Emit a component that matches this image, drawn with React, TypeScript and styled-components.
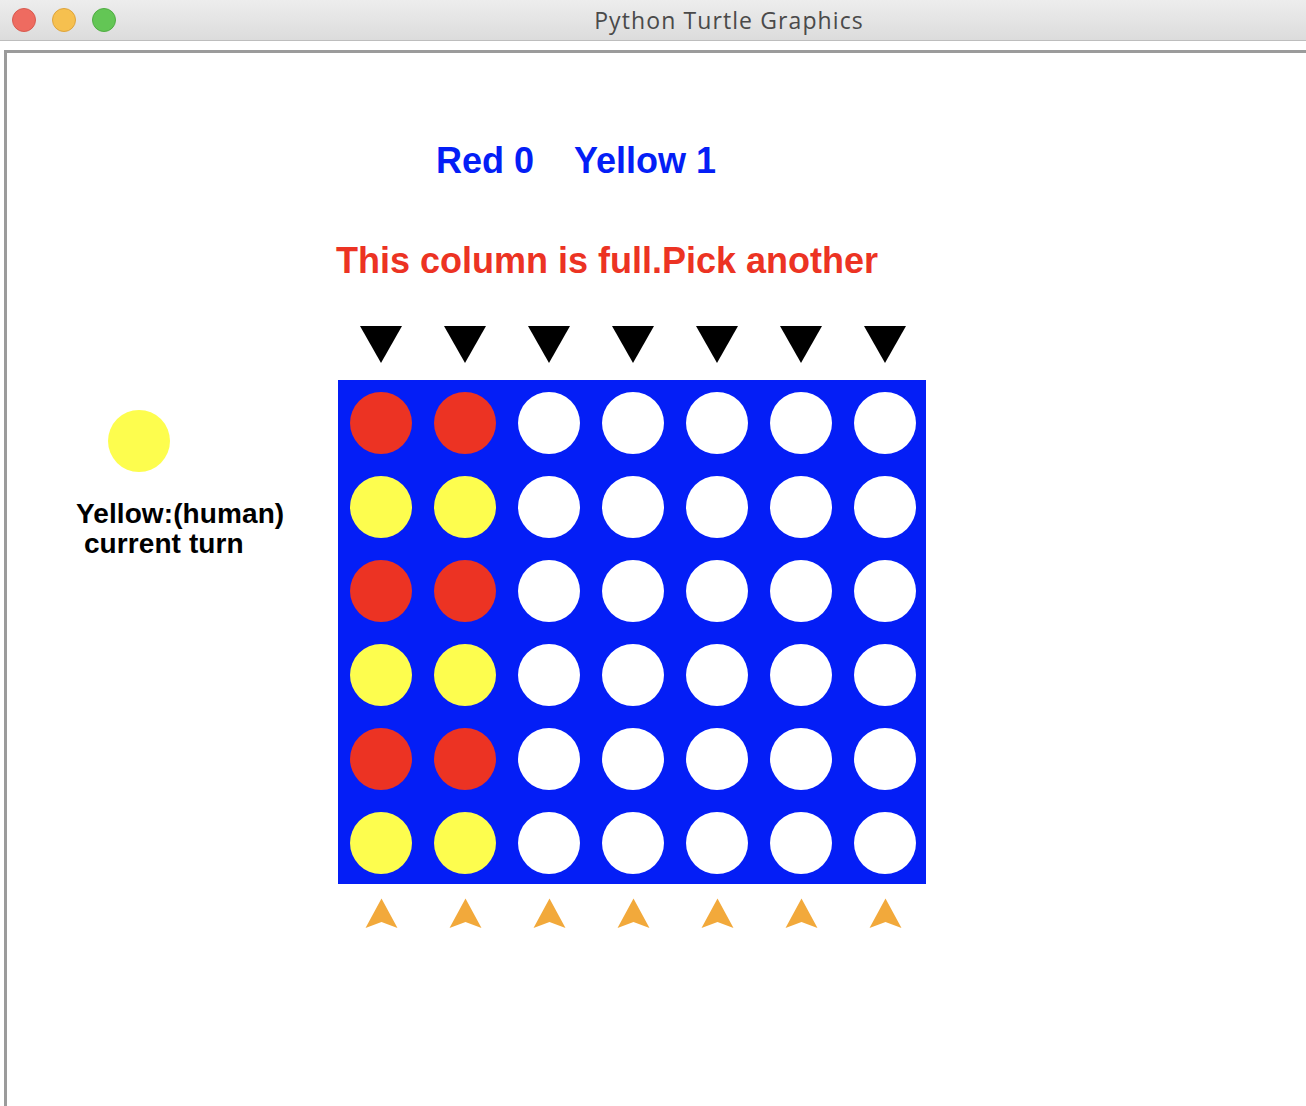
import React from "react";
import styled, { createGlobalStyle } from "styled-components";

const GlobalStyle = createGlobalStyle`
  html, body {
    margin: 0;
    padding: 0;
    background: #ffffff;
    overflow: hidden;
  }
  body {
    font-family: "Liberation Sans", Arial, sans-serif;
  }
`;

const BLUE = "#041ef6";
const RED = "#ec3323";
const YELLOW = "#fdfd4e";
const ORANGE = "#f2a93b";

type Piece = "r" | "y" | "e";

const BOARD: Piece[][] = [
  ["r", "r", "e", "e", "e", "e", "e"],
  ["y", "y", "e", "e", "e", "e", "e"],
  ["r", "r", "e", "e", "e", "e", "e"],
  ["y", "y", "e", "e", "e", "e", "e"],
  ["r", "r", "e", "e", "e", "e", "e"],
  ["y", "y", "e", "e", "e", "e", "e"],
];

const pieceColor: Record<Piece, string> = {
  r: RED,
  y: YELLOW,
  e: "#ffffff",
};

const Window = styled.div`
  width: 1306px;
  height: 1106px;
  display: flex;
  flex-direction: column;
  background: #ffffff;
  overflow: hidden;
`;

const TitleBar = styled.div`
  flex: none;
  height: 40px;
  display: flex;
  align-items: center;
  overflow: hidden;
  background: linear-gradient(to bottom, #ededed 0%, #dcdcdc 100%);
  border-bottom: 1px solid #bdbdbd;
`;

const Lights = styled.div`
  flex: none;
  width: 116px;
  box-sizing: border-box;
  padding-left: 12px;
  display: flex;
  gap: 16px;
`;

const Light = styled.span<{ $fill: string; $edge: string }>`
  width: 24px;
  height: 24px;
  box-sizing: border-box;
  border-radius: 50%;
  background: ${(p) => p.$fill};
  border: 1px solid ${(p) => p.$edge};
`;

const Title = styled.div`
  flex: none;
  width: 1226px;
  text-align: center;
  font-family: "Open Sans", "Liberation Sans", sans-serif;
  font-size: 23px;
  line-height: 42px;
  color: #4a4a4a;
  letter-spacing: 1.1px;
`;

const Body = styled.div`
  flex: 1;
  padding: 9px 0 0 4px;
  display: flex;
`;

const Canvas = styled.div`
  flex: 1;
  border-top: 3px solid #9b9b9b;
  border-left: 3px solid #9b9b9b;
  display: flex;
  align-items: flex-start;
`;

const Side = styled.div`
  flex: none;
  width: 331px;
  display: flex;
  flex-direction: column;
  align-items: flex-start;
`;

const TurnDisc = styled.div`
  width: 62px;
  height: 62px;
  border-radius: 50%;
  background: ${YELLOW};
  margin: 357px 0 0 101px;
`;

const TurnText = styled.div`
  margin: 27px 0 0 69px;
  font-family: "Liberation Sans", Arial, sans-serif;
  font-weight: 700;
  font-size: 28px;
  line-height: 30px;
  color: #000000;
  white-space: pre;
  letter-spacing: 0.1px;
`;

const Main = styled.div`
  flex: none;
  display: flex;
  flex-direction: column;
  align-items: flex-start;
`;

const Score = styled.div`
  margin: 90px 0 0 98px;
  display: flex;
  gap: 40px;
  font-weight: 700;
  font-size: 36px;
  line-height: 36px;
  color: ${BLUE};
  white-space: pre;
`;

const Message = styled.div`
  margin: 64px 0 0 -2px;
  font-weight: 700;
  font-size: 36px;
  line-height: 36px;
  color: ${RED};
  white-space: pre;
`;

const MarkerRow = styled.div<{ $top: number }>`
  margin-top: ${(p) => p.$top}px;
  display: grid;
  grid-template-columns: repeat(7, 84px);
`;

const MarkerCell = styled.div`
  display: flex;
  justify-content: center;
  padding-left: 2px;
  svg {
    display: block;
  }
`;

const Board = styled.div`
  margin-top: 17px;
  width: 588px;
  height: 504px;
  background: ${BLUE};
  display: grid;
  grid-template-columns: repeat(7, 84px);
  grid-template-rows: repeat(6, 84px);
`;

const Cell = styled.div`
  box-sizing: border-box;
  padding: 12px 10px 10px 12px;
`;

const Hole = styled.div<{ $color: string }>`
  width: 62px;
  height: 62px;
  border-radius: 50%;
  background: ${(p) => p.$color};
`;

const DropArrow = () => (
  <svg width="42" height="37" viewBox="0 0 42 37">
    <polygon points="0,0 42,0 21,37" fill="#000000" />
  </svg>
);

const TurtleArrow = () => (
  <svg width="33" height="31" viewBox="0 0 33 31">
    <polygon points="16.5,0.5 32.5,30 16.5,24 0.5,30" fill={ORANGE} />
  </svg>
);

const cols = [0, 1, 2, 3, 4, 5, 6];

export default function App() {
  return (
    <>
      <GlobalStyle />
      <Window>
        <TitleBar>
          <Lights>
            <Light $fill="#ee6b60" $edge="#d85a4f" />
            <Light $fill="#f6c04f" $edge="#dea43c" />
            <Light $fill="#63c655" $edge="#50ad43" />
          </Lights>
          <Title>Python Turtle Graphics</Title>
        </TitleBar>
        <Body>
          <Canvas>
            <Side>
              <TurnDisc />
              <TurnText>{"Yellow:(human)\n current turn"}</TurnText>
            </Side>
            <Main>
              <Score>
                <span>Red 0</span>
                <span>Yellow 1</span>
              </Score>
              <Message>This column is full.Pick another</Message>
              <MarkerRow $top={47}>
                {cols.map((c) => (
                  <MarkerCell key={c}>
                    <DropArrow />
                  </MarkerCell>
                ))}
              </MarkerRow>
              <Board>
                {BOARD.flatMap((row, r) =>
                  row.map((p, c) => (
                    <Cell key={`${r}-${c}`}>
                      <Hole $color={pieceColor[p]} />
                    </Cell>
                  ))
                )}
              </Board>
              <MarkerRow $top={14}>
                {cols.map((c) => (
                  <MarkerCell key={c}>
                    <TurtleArrow />
                  </MarkerCell>
                ))}
              </MarkerRow>
            </Main>
          </Canvas>
        </Body>
      </Window>
    </>
  );
}
